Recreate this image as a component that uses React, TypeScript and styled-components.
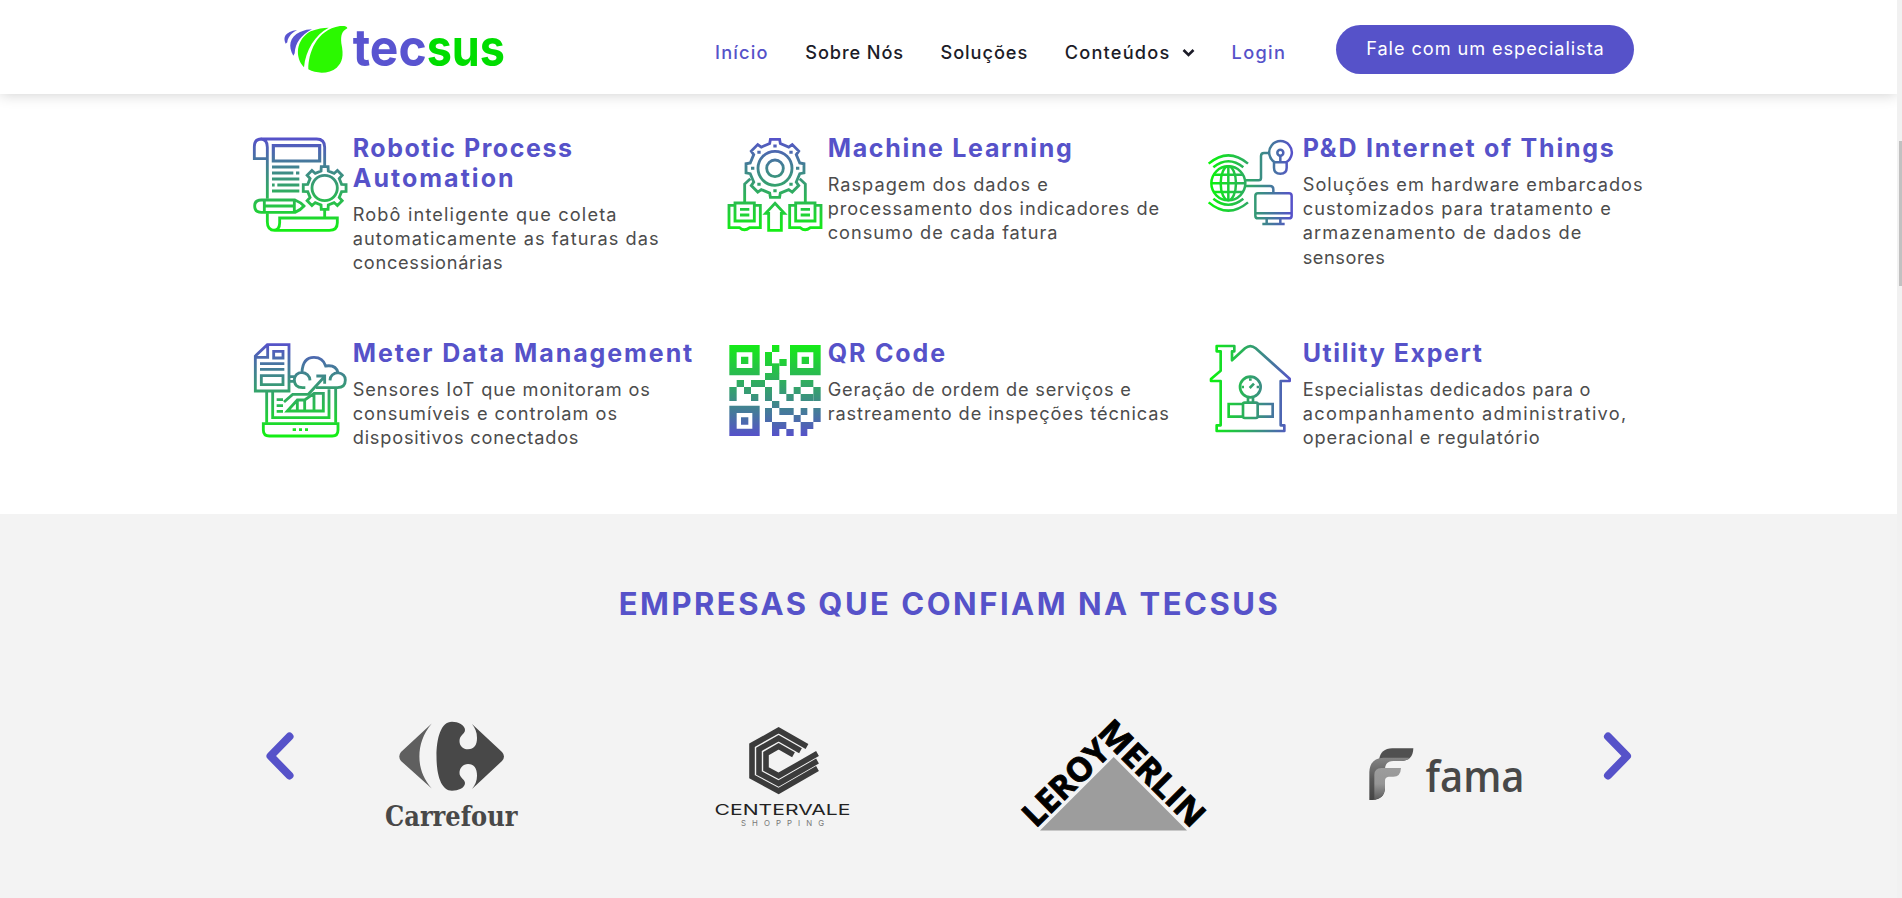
import React from 'react';
import styled, { createGlobalStyle } from 'styled-components';

const PURPLE = '#5652c9';
const GREEN = '#14ee14';

const GlobalStyle = createGlobalStyle`
  * { box-sizing: border-box; }
  body {
    margin: 0;
    overflow: hidden;
    background: #fff;
    font-family: Inter, "Liberation Sans", sans-serif;
  }
  svg { overflow: visible; }
`;

const Viewport = styled.div`
  display: flex;
  height: 898px;
`;

const Page = styled.div`
  flex: 1;
  display: flex;
  flex-direction: column;
  overflow: hidden;
`;

const ScrollTrack = styled.div`
  width: 5px;
  padding: 141px 0 0 2px;
  background: #f1f1f1;
`;

const ScrollThumb = styled.div`
  height: 145px;
  background: #c1c1c1;
`;

const Header = styled.header`
  flex: none;
  display: flex;
  align-items: flex-start;
  height: 94px;
  padding: 20px 263px 0 280px;
  background: #fff;
  box-shadow: 0 0 14px rgba(0, 0, 0, 0.2);
`;

const Nav = styled.nav`
  display: flex;
  align-items: center;
  height: 63px;
  margin-left: 210px;
`;

const NavLink = styled.a<{ $active?: boolean; $track: number }>`
  margin-right: 36.6px;
  font-size: 18.2px;
  font-weight: 500;
  letter-spacing: ${(p) => p.$track}px;
  color: ${(p) => (p.$active ? PURPLE : '#1c1c28')};
  white-space: nowrap;

  svg {
    margin-left: 11.5px;
  }
`;

const ContactButton = styled.button`
  height: 49px;
  width: 298px;
  margin: 5px 0 0 auto;
  padding: 0 0 3px 1px;
  border: 0;
  border-radius: 25px;
  background: ${PURPLE};
  color: #fff;
  font: 400 18.2px Inter, "Liberation Sans", sans-serif;
  letter-spacing: 0.92px;
  white-space: nowrap;
`;

const Services = styled.section`
  flex: none;
  display: grid;
  grid-template-columns: repeat(3, 475px);
  grid-auto-rows: 205px;
  height: 420px;
  padding: 39px 0 0 252px;
`;

const Card = styled.article`
  display: flex;
  align-items: flex-start;
  gap: 4.7px;

  > svg {
    flex: none;
    margin-top: 3px;
  }
`;

const CardTitle = styled.h3`
  margin: 0 0 9px;
  font-size: 25px;
  font-weight: 700;
  line-height: 30px;
  color: ${PURPLE};
`;

const CardText = styled.p`
  margin: 0;
  font-size: 18.2px;
  line-height: 24.2px;
  color: #4c4c4c;
`;

const Line = styled.span<{ $track: number }>`
  display: block;
  letter-spacing: ${(p) => p.$track}px;
  white-space: nowrap;
`;

const Clients = styled.section`
  flex: 1;
  background: #f3f3f3;
`;

const ClientsTitle = styled.h2`
  margin: 0;
  padding: 71px 0 0 2px;
  font-size: 31px;
  font-weight: 700;
  line-height: 38px;
  letter-spacing: 2.5px;
  text-align: center;
  color: ${PURPLE};
`;

const Carousel = styled.div`
  display: flex;
  align-items: flex-start;
  justify-content: center;
  padding: 87px 2px 0 0;
`;

const Slides = styled.div`
  display: flex;
  gap: 132px;
  margin: 0 53px 0 55px;
`;

const Arrow = styled.button`
  flex: none;
  width: 34px;
  height: 52px;
  margin-top: 20px;
  padding: 0;
  border: 0;
  background: none;

  svg {
    display: block;
  }
`;

function gear(cx: number, cy: number, outer: number, inner: number, teeth: number) {
  const step = (Math.PI * 2) / teeth;
  const pt = (r: number, a: number) =>
    `${(cx + r * Math.sin(a)).toFixed(1)} ${(cy - r * Math.cos(a)).toFixed(1)}`;
  const parts: string[] = [];
  for (let i = 0; i < teeth; i++) {
    const a = i * step;
    parts.push(pt(inner, a - step * 0.27), pt(outer, a - step * 0.2), pt(outer, a + step * 0.2), pt(inner, a + step * 0.27));
  }
  return `M${parts.join('L')}Z`;
}

type IconProps = {
  id: string;
  row: 1 | 2;
  from: string;
  to: string;
  horizontal?: boolean;
  width?: number;
  children: React.ReactNode;
};

function GradientIcon({ id, row, from, to, horizontal, width = 8.5, children }: IconProps) {
  const top = row === 1 ? 48 : 33;
  const axis = horizontal
    ? { x1: 58, y1: 0, x2: 303, y2: 0 }
    : { x1: 0, y1: top + 8, x2: 0, y2: top + 284 };
  return (
    <svg width="96" height="96" viewBox={`36 ${top} 288 288`} fill="none" stroke={`url(#${id})`} strokeWidth={width}>
      <defs>
        <linearGradient id={id} gradientUnits="userSpaceOnUse" {...axis}>
          <stop offset="0" stopColor={from} />
          <stop offset="1" stopColor={to} />
        </linearGradient>
      </defs>
      {children}
    </svg>
  );
}

const AutomationIcon = () => (
  <GradientIcon id="gAutomation" row={1} from={PURPLE} to={GREEN}>
    <path d="M82 236V82Q82 57 62 57M82 116H43V80Q43 57 64 57H230Q254 57 254 82V138" />
    <path d="M100 77H239V123H100Z" strokeWidth="9.5" />
    <path d="M96 141H178M96 159H160M168 159H178M96 177H178M96 195H104M112 195H178M96 213H178" />
    <path d={gear(254, 204, 65, 52, 8)} />
    <circle cx="254" cy="204" r="38" />
    <path d="M64 240H165Q182 247 192 258Q182 270 165 277H64Q44 277 44 258Q44 240 64 240ZM73 240V277M163 240V277M73 258H163" />
    <path d="M82 280V306Q82 331 104 331H268Q292 331 292 308V294H119V308Q119 331 100 331M254 270V294" />
  </GradientIcon>
);

const LearningIcon = () => (
  <GradientIcon id="gLearning" row={1} from={PURPLE} to={GREEN}>
    <path d={gear(180, 145, 88, 76, 8)} />
    <circle cx="180" cy="145" r="51" />
    <circle cx="180" cy="145" r="25" />
    <path
      strokeWidth="9"
      d="M175 78H185M175 212H185M108 145H118M243 145H253M127 97H137M223 97H233M127 193H137M223 193H233"
    />
    <path d="M89 250V192L106 176M271 250V192L254 176" />
    {[0, 182].map((x) => (
      <g key={x} transform={`translate(${x} 0)`}>
        <path d="M60 256H42V323H74Q88 336 104 323H136V256H118" />
        <path d="M60 249H118V303H60ZM75 268H103M75 285H103" />
      </g>
    ))}
    <path d="M180 250L208 280H199V331H161V280H152Z" />
  </GradientIcon>
);

const ThingsIcon = () => (
  <GradientIcon id="gThings" row={1} from="#0af50a" to={PURPLE} horizontal width={7.5}>
    <circle cx="115" cy="190" r="51" />
    <ellipse cx="115" cy="190" rx="23" ry="51" />
    <path d="M115 139V241M64 190H166M71 164H159M71 216H159" />
    <path d="M56 131Q115 81 174 131M70 142Q115 106 160 142M56 247Q115 297 174 247M70 236Q115 272 160 236" />
    <path d="M166 181H206Q213 181 213 174V108Q213 99 222 99H237M166 198H240Q250 198 250 208V220" />
    <path d="M255 127A34 34 0 1 1 288 127M252 127H290V143Q290 161 271 161Q252 161 252 143ZM271 106V127" />
    <circle cx="271" cy="98" r="9" />
    <rect x="196" y="220" width="109" height="75" rx="8" />
    <path d="M196 280H305M230 296V311M271 296V311M217 312H284" />
  </GradientIcon>
);

const MeterIcon = () => (
  <GradientIcon id="gMeter" row={2} from={PURPLE} to={GREEN}>
    <path d="M46 183V78L82 44H147V183ZM46 82H83V44M101 64H129V84H101ZM60 101H133M60 118H133M64 137H129V164H64Z" />
    <path d="M196 173H188Q162 172 163 148Q165 129 186 127Q188 82 222 82Q249 82 257 108Q288 103 294 128Q316 132 316 150Q316 173 292 173H228M184 127Q208 129 210 151M296 128Q271 130 270 151M150 140H164M150 154H164" />
    <path d="M80 186V278M287 175V278M98 186V263H267V178" />
    <path d="M70 281H294V300Q294 318 277 318H88Q70 318 70 300ZM158 299H168M177 299H186M195 299H204" />
    <path d="M132 216L158 193H205L252 142M229 138H254V161" />
    <path d="M142 243L172 210H194L222 190H250V243ZM172 210V243M194 210V243M222 190V243M110 209H129M110 227H129M110 244H129" />
  </GradientIcon>
);

const QR_CELLS: [number, number, number, number][] = [
  [171, 45, 22, 21], [150, 66, 21, 42], [193, 87, 22, 21], [171, 100, 22, 30], [150, 129, 43, 21],
  [65, 150, 22, 21], [108, 150, 42, 21], [43, 171, 22, 42], [87, 171, 21, 21], [108, 192, 22, 21],
  [150, 171, 21, 42], [193, 150, 21, 42], [214, 192, 22, 21], [236, 171, 21, 21], [257, 150, 38, 21],
  [295, 171, 22, 42], [257, 192, 38, 21], [171, 213, 22, 21], [150, 234, 21, 42], [193, 234, 43, 21],
  [236, 255, 21, 21], [257, 234, 20, 21], [295, 234, 22, 42], [171, 276, 43, 21], [257, 276, 38, 21],
  [171, 297, 22, 21], [214, 297, 22, 21], [257, 297, 20, 21],
];

const QrIcon = () => (
  <GradientIcon id="gQr" row={2} from={GREEN} to={PURPLE} width={22}>
    <path d="M54 56H123V125H54ZM236 56H306V125H236ZM54 238H123V307H54Z" />
    <g fill="url(#gQr)" stroke="none">
      <path d="M78 80H100V102H78ZM260 80H282V102H260ZM78 262H100V284H78Z" />
      {QR_CELLS.map(([x, y, w, h]) => (
        <rect key={`${x}-${y}`} x={x} y={y} width={w} height={h} />
      ))}
    </g>
  </GradientIcon>
);

const UtilityIcon = () => (
  <GradientIcon id="gUtility" row={2} from="#0af50a" to={PURPLE} horizontal width={8}>
    <path
      strokeLinejoin="round"
      d="M80 64V48H133V64H126V91L165 55Q181 42 197 55L299 146V153H272V286H283V303H80V286H92V153H63V147L92 122V64Z"
    />
    <circle cx="181" cy="171" r="31" />
    <path d="M179 174L192 161M155 171H162M200 171H207M181 145V152" />
    <path d="M174 203V217M189 203V217M158 222H116V260H158M203 222H248V260H203" />
    <rect x="159" y="218" width="44" height="46" rx="5" />
  </GradientIcon>
);

const TecsusLogo = () => (
  <svg width="225" height="60" viewBox="120 60 675 180">
    <g fill="#2bf900">
      <path d="M205 208C205 160 228 90 300 78C312 77 322 78 322 85C305 94 302 106 304 130C312 168 307 188 290 203C268 222 230 222 205 208Z" />
      <path d="M192 202C163 172 168 118 212 94C232 85 250 84 266 83C225 105 197 150 192 202Z" />
    </g>
    <g fill="#5954d0">
      <path d="M160 167C144 140 148 110 180 96C195 90 205 88 216 88C183 106 166 128 164 160Z" />
      <path d="M137 131C128 112 135 95 171 90C150 102 143 115 142 127Z" />
    </g>
    <g fontFamily="Inter, sans-serif" fontWeight="700" fontSize="156">
      <text x="338" y="199" textLength="222" lengthAdjust="spacingAndGlyphs" fill="#5954d0">tec</text>
      <text x="560" y="199" textLength="235" lengthAdjust="spacingAndGlyphs" fill="#00dd00">sus</text>
    </g>
  </svg>
);

const CarrefourLogo = () => (
  <svg width="200" height="130" viewBox="351 710 200 130">
    <path
      fill="#5f5f5f"
      d="M431.7 723.5L401 752Q397.5 756.5 401 761L431.7 788.5C423 778 419.4 768 419.4 756.5S423 734 431.7 723.5Z"
    />
    <path
      fill="#484848"
      d="M452 721.7C458 721.7 465 725 465 730C465 734 459.5 735 459.5 741C459.5 746 463 749.3 468 749.3C474 749.3 477 745 477 738C477 732 475 728 472 724L502 752Q506 756.5 502 761L472 789C475 785 477 781 477 776C477 768 474 764 468 764C463 764 459.5 768 459.5 773C459.5 778 465 779 465 783C465 788 458 790.7 452 790.7C441 790.7 436.5 775 436.5 756.2C436.5 738 441 721.7 452 721.7Z"
    />
    <text
      x="385" y="826" textLength="132.5" lengthAdjust="spacingAndGlyphs"
      fontFamily="'DejaVu Serif', serif" fontWeight="700" fontSize="28.5" fill="#484848"
    >Carrefour</text>
  </svg>
);

const CentervaleLogo = () => (
  <svg width="200" height="130" viewBox="683 710 200 130">
    <g fill="none" stroke="#3b3b3b" strokeWidth="5.6">
      <path d="M807 746.5L778.6 730.3L752 745.2V776.7L778.6 791L817.5 768.5" />
      <path d="M800.5 750.7L778.6 738.3L759 749.3V773L778.6 783.5L817.5 761" />
      <path d="M793.5 754.7L778.6 746.3L766 753.5V769L778.6 775.8L817.5 753.5" />
    </g>
    <text
      x="714.5" y="815.3" textLength="136" lengthAdjust="spacingAndGlyphs"
      fontFamily="Inter, sans-serif" fontSize="15" fill="#222"
    >CENTERVALE</text>
    <text x="741" y="825.7" textLength="83" fontFamily="Inter, sans-serif" fontSize="7.8" fill="#777">SHOPPING</text>
  </svg>
);

const LeroyLogo = () => (
  <svg width="200" height="130" viewBox="1015 710 200 130">
    <path d="M1113.7 757L1187 830.5H1040Z" fill="#9d9d9d" />
    <g
      fontFamily="'Open Sans', sans-serif" fontWeight="700" fontSize="33"
      fill="#000" stroke="#000" strokeWidth="0.9"
    >
      <text transform="translate(1035.7 828.7) rotate(-44.5)" textLength="107" lengthAdjust="spacingAndGlyphs">LEROY</text>
      <text transform="translate(1096 733.5) rotate(45)" textLength="135" lengthAdjust="spacingAndGlyphs">MERLIN</text>
    </g>
  </svg>
);

const FamaLogo = () => (
  <svg width="200" height="130" viewBox="1347 710 200 130">
    <defs>
      <linearGradient id="famaSide" x1="0" y1="0" x2="0" y2="1">
        <stop offset="0" stopColor="#858585" />
        <stop offset="0.5" stopColor="#5a5a5a" />
        <stop offset="1" stopColor="#444" />
      </linearGradient>
      <linearGradient id="famaFront" x1="0" y1="0" x2="0" y2="1">
        <stop offset="0" stopColor="#9c9c9c" />
        <stop offset="0.5" stopColor="#969696" />
        <stop offset="1" stopColor="#5c5c5c" />
      </linearGradient>
    </defs>
    <g transform="translate(1340 700) scale(0.33333)">
      <path fill="#505050" d="M117 180Q122 145 157 145H220Q219 183 183 183H150Z" />
      <path fill="url(#famaSide)" d="M88 300V216Q90 174 130 173H209Q199 183 183 183H160Q136 184 135 206V265Q133 299 98 300Z" />
      <path fill="url(#famaFront)" d="M103 299V224Q104 204 124 204H183Q182 230 160 230H146Q135 231 135 243V265Q133 296 103 299Z" />
    </g>
    <text
      x="1425.5" y="792.3" textLength="99" lengthAdjust="spacingAndGlyphs"
      fontFamily="'Open Sans', sans-serif" fontWeight="600" fontSize="42.5" fill="#484848"
    >fama</text>
  </svg>
);

const ArrowIcon = ({ d }: { d: string }) => (
  <svg width="34" height="52" viewBox="0 0 34 52" fill="none" stroke={PURPLE} strokeWidth="8" strokeLinecap="round" strokeLinejoin="round">
    <path d={d} />
  </svg>
);

type TextLine = [string, number];

const SERVICES: { icon: React.ReactNode; title: TextLine[]; text: TextLine[] }[] = [
  {
    icon: <AutomationIcon />,
    title: [['Robotic Process', 1.53], ['Automation', 2.03]],
    text: [['Robô inteligente que coleta', 1.15], ['automaticamente as faturas das', 1.08], ['concessionárias', 0.72]],
  },
  {
    icon: <LearningIcon />,
    title: [['Machine Learning', 1.67]],
    text: [['Raspagem dos dados e', 1], ['processamento dos indicadores de', 0.95], ['consumo de cada fatura', 1]],
  },
  {
    icon: <ThingsIcon />,
    title: [['P&D Internet of Things', 1.77]],
    text: [
      ['Soluções em hardware embarcados', 1.03],
      ['customizados para tratamento e', 1.06],
      ['armazenamento de dados de', 1.17],
      ['sensores', 0.57],
    ],
  },
  {
    icon: <MeterIcon />,
    title: [['Meter Data Management', 1.91]],
    text: [['Sensores IoT que monitoram os', 0.92], ['consumíveis e controlam os', 0.99], ['dispositivos conectados', 0.81]],
  },
  {
    icon: <QrIcon />,
    title: [['QR Code', 1.85]],
    text: [['Geração de ordem de serviços e', 0.78], ['rastreamento de inspeções técnicas', 0.9]],
  },
  {
    icon: <UtilityIcon />,
    title: [['Utility Expert', 1.58]],
    text: [['Especialistas dedicados para o', 0.75], ['acompanhamento administrativo,', 1.31], ['operacional e regulatório', 0.94]],
  },
];

const renderLines = (lines: TextLine[]) =>
  lines.map(([text, track]) => (
    <Line key={text} $track={track}>{text}</Line>
  ));

export default function App() {
  return (
    <Viewport>
      <GlobalStyle />
      <Page>
        <Header>
          <TecsusLogo />
          <Nav>
            <NavLink $active $track={1.2}>Início</NavLink>
            <NavLink $track={0.87}>Sobre Nós</NavLink>
            <NavLink $track={0.93}>Soluções</NavLink>
            <NavLink $track={1.19}>
              Conteúdos
              <svg width="13" height="11" viewBox="0 0 13 11" fill="none" stroke="#1c1c28" strokeWidth="2.6">
                <path d="M1.5 2L6.5 7L11.5 2" />
              </svg>
            </NavLink>
            <NavLink $active $track={1.35}>Login</NavLink>
          </Nav>
          <ContactButton>Fale com um especialista</ContactButton>
        </Header>
        <Services>
          {SERVICES.map(({ icon, title, text }) => (
            <Card key={title[0][0]}>
              {icon}
              <div>
                <CardTitle>{renderLines(title)}</CardTitle>
                <CardText>{renderLines(text)}</CardText>
              </div>
            </Card>
          ))}
        </Services>
        <Clients>
          <ClientsTitle>EMPRESAS QUE CONFIAM NA TECSUS</ClientsTitle>
          <Carousel>
            <Arrow aria-label="Anterior"><ArrowIcon d="M27.5 6.5L8.5 26L27.5 45.5" /></Arrow>
            <Slides>
              <CarrefourLogo />
              <CentervaleLogo />
              <LeroyLogo />
              <FamaLogo />
            </Slides>
            <Arrow aria-label="Próximo"><ArrowIcon d="M8 6.5L27 26L8 45.5" /></Arrow>
          </Carousel>
        </Clients>
      </Page>
      <ScrollTrack>
        <ScrollThumb />
      </ScrollTrack>
    </Viewport>
  );
}
